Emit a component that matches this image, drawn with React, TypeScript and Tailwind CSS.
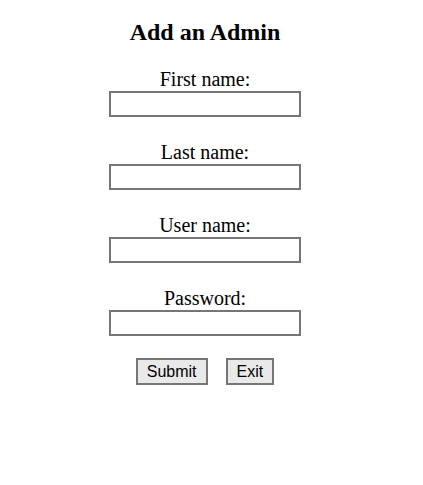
import React from "react";

const serif = { fontFamily: '"Liberation Serif", "Times New Roman", serif' };

function Field({ label, type = "text" }: { label: string; type?: string }) {
  return (
    <div className="flex flex-col items-center">
      <label className="text-[20px] leading-[23px] text-black">{label}</label>
      <input
        type={type}
        className="w-[192px] h-[26px] border-2 border-[#767676] bg-white outline-none"
      />
    </div>
  );
}

export default function App() {
  return (
    <div
      className="w-[410px] bg-white text-black flex flex-col items-center font-['Liberation_Serif','Times_New_Roman',serif]"
      style={serif}
    >
      <h2 className="mt-[18px] text-[24px] leading-[28px] font-bold">Add an Admin</h2>
      <div className="mt-[22px] flex flex-col gap-[24px]">
        <Field label="First name:" />
        <Field label="Last name:" />
        <Field label="User name:" />
        <Field label="Password:" type="password" />
      </div>
      <div className="mt-[22px] flex gap-[18px] font-['Liberation_Sans',Arial,sans-serif] text-[16px]">
        <button className="h-[27px] px-[9px] border-2 border-[#767676] bg-[#e9e9e9] leading-[18px] text-black">
          Submit
        </button>
        <button className="h-[27px] px-[9px] border-2 border-[#767676] bg-[#e9e9e9] leading-[18px] text-black">
          Exit
        </button>
      </div>
    </div>
  );
}
